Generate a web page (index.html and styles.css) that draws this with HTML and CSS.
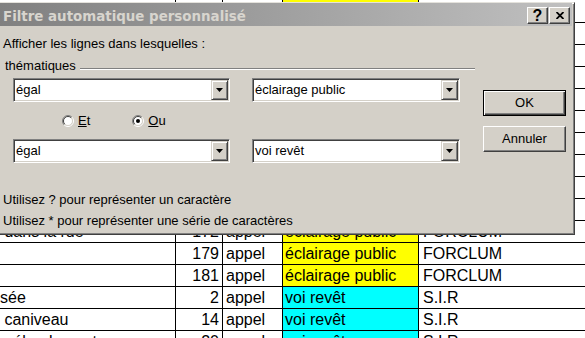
FILE: index.html
```html
<!DOCTYPE html>
<html lang="fr">
<head>
    <meta charset="UTF-8">
    <title>Filtre automatique personnalisé</title>
    <link rel="stylesheet" href="styles.css">
</head>
<body>
<div class="sheet">
    <div class="row"><span class="desc">Candélabre couché</span><span class="num">151</span><span class="type">appel</span><span class="theme yellow">éclairage public</span><span>FORCLUM</span></div>
    <div class="row"><span class="desc">Lampe grillée</span><span class="num">153</span><span class="type">appel</span><span class="theme yellow">éclairage public</span><span>FORCLUM</span></div>
    <div class="row"><span class="desc">Nid de poule</span><span class="num">4</span><span class="type">appel</span><span class="theme cyan">voi revêt</span><span>S.I.R</span></div>
    <div class="row"><span class="desc">Lampe éteinte</span><span class="num">158</span><span class="type">appel</span><span class="theme yellow">éclairage public</span><span>FORCLUM</span></div>
    <div class="row"><span class="desc">Trottoir affaissé</span><span class="num">7</span><span class="type">appel</span><span class="theme cyan">voi revêt</span><span>S.I.R</span></div>
    <div class="row"><span class="desc">Câble arraché</span><span class="num">160</span><span class="type">appel</span><span class="theme yellow">éclairage public</span><span>FORCLUM</span></div>
    <div class="row"><span class="desc">Candélabre penché</span><span class="num">163</span><span class="type">appel</span><span class="theme yellow">éclairage public</span><span>FORCLUM</span></div>
    <div class="row"><span class="desc">Lampe clignotante</span><span class="num">166</span><span class="type">appel</span><span class="theme yellow">éclairage public</span><span>FORCLUM</span></div>
    <div class="row"><span class="desc">Bordure cassée</span><span class="num">9</span><span class="type">appel</span><span class="theme cyan">voi revêt</span><span>S.I.R</span></div>
    <div class="row"><span class="desc">Armoire ouverte</span><span class="num">170</span><span class="type">appel</span><span class="theme yellow">éclairage public</span><span>FORCLUM</span></div>
    <div class="row"><span class="desc">&nbsp;dans la rue</span><span class="num">172</span><span class="type">appel</span><span class="theme yellow">éclairage public</span><span>FORCLUM</span></div>
    <div class="row"><span class="desc"></span><span class="num">179</span><span class="type">appel</span><span class="theme yellow">éclairage public</span><span>FORCLUM</span></div>
    <div class="row"><span class="desc"></span><span class="num">181</span><span class="type">appel</span><span class="theme yellow">éclairage public</span><span>FORCLUM</span></div>
    <div class="row"><span class="desc">sée</span><span class="num">2</span><span class="type">appel</span><span class="theme cyan">voi revêt</span><span>S.I.R</span></div>
    <div class="row"><span class="desc">&nbsp;caniveau</span><span class="num">14</span><span class="type">appel</span><span class="theme cyan">voi revêt</span><span>S.I.R</span></div>
    <div class="row"><span class="desc">&nbsp;&nbsp;&nbsp;éboulement</span><span class="num">20</span><span class="type">appel</span><span class="theme cyan">voi revêt</span><span>S.I.R</span></div>
</div>

<div class="dialog">
    <div class="titlebar">
        <span class="title">Filtre automatique personnalisé</span>
        <span class="tbtn help">?</span>
        <span class="tbtn close">
            <svg width="8" height="7" viewBox="0 0 8 7"><path d="M0.5 0L7.5 7M7.5 0L0.5 7" stroke="#000" stroke-width="1.8"/></svg>
        </span>
    </div>

    <div class="content">
        <div class="main">
            <p class="intro">Afficher les lignes dans lesquelles :</p>

            <div class="legend">
                <span>thématiques</span>
                <div class="groove"></div>
            </div>

            <div class="combo-row">
                <div class="combo wide">
                    <span class="value">égal</span>
                    <span class="drop"><svg width="7" height="4" viewBox="0 0 7 4"><path d="M0 0H7L3.5 4Z" fill="#000"/></svg></span>
                </div>
                <div class="combo narrow">
                    <span class="value">éclairage public</span>
                    <span class="drop"><svg width="7" height="4" viewBox="0 0 7 4"><path d="M0 0H7L3.5 4Z" fill="#000"/></svg></span>
                </div>
            </div>

            <div class="radios">
                <div class="radio">
                    <svg width="12" height="12" viewBox="0 0 12 12">
                        <circle cx="6" cy="6" r="4.5" fill="#fff"/>
                        <path d="M2.1 9.9A5.5 5.5 0 0 1 9.9 2.1" fill="none" stroke="#808080"/>
                        <path d="M9.9 2.1A5.5 5.5 0 0 1 2.1 9.9" fill="none" stroke="#fff"/>
                        <path d="M2.8 9.2A4.5 4.5 0 0 1 9.2 2.8" fill="none" stroke="#404040"/>
                        <path d="M9.2 2.8A4.5 4.5 0 0 1 2.8 9.2" fill="none" stroke="#d4d0c8"/>
                    </svg>
                    <span><u>E</u>t</span>
                </div>
                <div class="radio">
                    <svg width="12" height="12" viewBox="0 0 12 12">
                        <circle cx="6" cy="6" r="4.5" fill="#fff"/>
                        <path d="M2.1 9.9A5.5 5.5 0 0 1 9.9 2.1" fill="none" stroke="#808080"/>
                        <path d="M9.9 2.1A5.5 5.5 0 0 1 2.1 9.9" fill="none" stroke="#fff"/>
                        <path d="M2.8 9.2A4.5 4.5 0 0 1 9.2 2.8" fill="none" stroke="#404040"/>
                        <path d="M9.2 2.8A4.5 4.5 0 0 1 2.8 9.2" fill="none" stroke="#d4d0c8"/>
                        <circle cx="6" cy="6" r="2" fill="#000"/>
                    </svg>
                    <span><u>O</u>u</span>
                </div>
            </div>

            <div class="combo-row flat">
                <div class="combo wide">
                    <span class="value">égal</span>
                    <span class="drop"><svg width="7" height="4" viewBox="0 0 7 4"><path d="M0 0H7L3.5 4Z" fill="#000"/></svg></span>
                </div>
                <div class="combo narrow">
                    <span class="value">voi revêt</span>
                    <span class="drop"><svg width="7" height="4" viewBox="0 0 7 4"><path d="M0 0H7L3.5 4Z" fill="#000"/></svg></span>
                </div>
            </div>

            <div class="hints">
                <p>Utilisez ? pour représenter un caractère</p>
                <p>Utilisez * pour représenter une série de caractères</p>
            </div>
        </div>

        <div class="side">
            <button class="btn default">OK</button>
            <button class="btn">Annuler</button>
        </div>
    </div>
</div>
</body>
</html>
```

FILE: styles.css
```css
* {
    margin: 0;
    padding: 0;
    box-sizing: border-box;
}

body {
    width: 585px;
    height: 338px;
    overflow: hidden;
    position: relative;
    background-color: #fff;
    color: #000;
    font-family: "Liberation Sans", Arial, sans-serif;
}

/* feuille excel derriere la boite */
.sheet {
    font-size: 16px;
}

.row {
    display: grid;
    grid-template-columns: 176px 47px 60px 136px 1fr;
    height: 22px;
    border-bottom: 1px solid #000;
}

.row:first-child {
    height: 23px;
}

.row span {
    border-right: 1px solid #000;
    line-height: 21px;
    white-space: nowrap;
    overflow: hidden;
}

.row:first-child span {
    line-height: 22px;
}

.row span:last-child {
    border-right: 0;
    padding-left: 4px;
}

.num {
    text-align: right;
    padding-right: 3px;
}

.type {
    padding-left: 3px;
}

.theme {
    padding-left: 2px;
}

.yellow {
    background-color: #ffff00;
}

.cyan {
    background-color: #00ffff;
}

/* boite de dialogue */
.dialog {
    position: absolute;
    left: -6px;
    top: 2px;
    width: 581px;
    height: 233px;
    overflow: hidden;
    background-color: #d4d0c8;
    border: 1px solid;
    border-color: #e4e2dc #404040 #404040 #e4e2dc;
    box-shadow: inset 1px 1px #fff, inset -1px -1px #808080;
    padding: 0 2px 2px 2px;
    font-size: 13px;
}

.titlebar {
    display: flex;
    align-items: center;
    height: 23px;
    padding-right: 2px;
    background: linear-gradient(to right, #808080, #c0c0c0);
}

.title {
    flex: 1;
    padding: 4px 0 0 6px;
    line-height: 17px;
    font-family: "DejaVu Sans", Verdana, sans-serif;
    font-weight: bold;
    font-size: 13.4px;
    color: #d8d5ce;
    white-space: nowrap;
}

.tbtn {
    display: flex;
    align-items: center;
    justify-content: center;
    width: 21px;
    height: 17px;
    margin-top: 2px;
    background-color: #d4d0c8;
    border: 1px solid;
    border-color: #fff #404040 #404040 #fff;
    box-shadow: inset -1px -1px #808080;
}

.tbtn + .tbtn {
    margin-left: 1px;
}

.help {
    font-weight: bold;
    font-size: 16px;
    line-height: 1;
}

.content {
    display: flex;
    padding: 10px 0 0 6px;
}

.main {
    width: 472px;
}

.intro {
    line-height: 16px;
}

.legend {
    display: flex;
    margin-top: 6px;
    padding-left: 2px;
    line-height: 16px;
}

.groove {
    flex: 1;
    height: 2px;
    margin: 10px 0 0 4px;
    border-top: 1px solid #808080;
    border-bottom: 1px solid #fff;
}

.combo-row {
    display: flex;
    gap: 22px;
    margin-top: 4px;
    padding-left: 10px;
}

.combo-row.flat {
    margin-top: 0;
}

.combo {
    display: flex;
    height: 24px;
    padding: 1px;
    background-color: #fff;
    border: 1px solid;
    border-color: #808080 #fff #fff #808080;
    box-shadow: inset 1px 1px #404040, inset -1px -1px #d4d0c8;
}

.wide {
    width: 217px;
}

.narrow {
    width: 208px;
}

.value {
    flex: 1;
    padding-left: 1px;
    line-height: 20px;
}

.drop {
    display: flex;
    align-items: center;
    justify-content: center;
    width: 17px;
    height: 20px;
    background-color: #d4d0c8;
    border: 1px solid;
    border-color: #d4d0c8 #404040 #404040 #d4d0c8;
    box-shadow: inset 1px 1px #fff, inset -1px -1px #808080;
}

.radios {
    display: flex;
    align-items: center;
    gap: 42px;
    height: 37px;
    padding-left: 59px;
}

.radio {
    display: flex;
    align-items: center;
    gap: 4px;
    line-height: 16px;
}

.hints {
    margin-top: 26px;
    line-height: 21px;
}

.side {
    width: 83px;
    margin-left: 8px;
    padding-top: 54px;
}

.btn {
    display: block;
    width: 83px;
    height: 26px;
    font: inherit;
    color: #000;
    line-height: 24px;
    text-align: center;
    background-color: #d4d0c8;
    border: 1px solid;
    border-color: #fff #404040 #404040 #fff;
    box-shadow: inset -1px -1px #808080;
}

.btn.default {
    border-color: #000;
    box-shadow: inset 1px 1px #fff, inset -1px -1px #404040, inset -2px -2px #808080;
}

.btn + .btn {
    margin-top: 10px;
}
```
